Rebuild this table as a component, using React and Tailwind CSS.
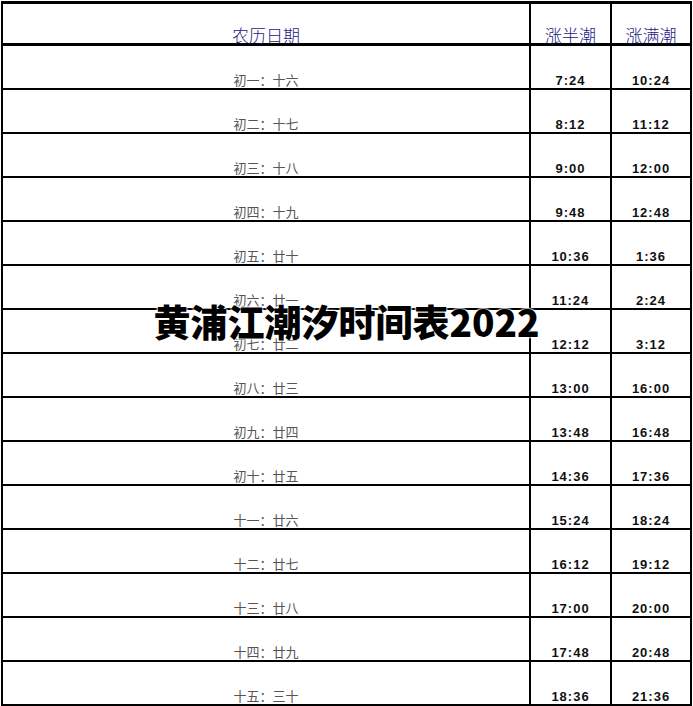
import React from "react";

const rows = [
  ["初一：十六", "7:24", "10:24"],
  ["初二：十七", "8:12", "11:12"],
  ["初三：十八", "9:00", "12:00"],
  ["初四：十九", "9:48", "12:48"],
  ["初五：廿十", "10:36", "1:36"],
  ["初六：廿一", "11:24", "2:24"],
  ["初七：廿二", "12:12", "3:12"],
  ["初八：廿三", "13:00", "16:00"],
  ["初九：廿四", "13:48", "16:48"],
  ["初十：廿五", "14:36", "17:36"],
  ["十一：廿六", "15:24", "18:24"],
  ["十二：廿七", "16:12", "19:12"],
  ["十三：廿八", "17:00", "20:00"],
  ["十四：廿九", "17:48", "20:48"],
  ["十五：三十", "18:36", "21:36"],
];

export default function App() {
  return (
    <div className="relative w-[693px] h-[706px] bg-white overflow-hidden">
      <div className="ml-[1px] mt-[1px] w-[691px] border-t-[3px] border-x-2 border-black">
        <div className="grid grid-cols-[526px_81px_1fr] h-[42px] border-b-[3px] border-black">
          <div className="flex items-end justify-center pb-0 text-[17px] leading-[16px] text-[#1c2180] [font-family:'Noto_Sans_CJK_SC',sans-serif] font-light">
            农历日期
          </div>
          <div className="flex items-end justify-center pb-0 border-l-2 border-black text-[17px] leading-[16px] text-[#1c2180] [font-family:'Noto_Sans_CJK_SC',sans-serif] font-light">
            涨半潮
          </div>
          <div className="flex items-end justify-center pb-0 border-l-2 border-black text-[17px] leading-[16px] text-[#1c2180] [font-family:'Noto_Sans_CJK_SC',sans-serif] font-light">
            涨满潮
          </div>
        </div>
        {rows.map((r, i) => (
          <div
            key={i}
            className="grid grid-cols-[526px_81px_1fr] h-[44px] border-b-2 border-black"
          >
            <div className="flex items-end justify-center pb-[1px] text-[13px] leading-[14px] text-[#555] [font-family:'Noto_Sans_CJK_SC',sans-serif] font-normal">
              {r[0]}
            </div>
            <div className="flex items-end justify-center pb-0 border-l-2 border-black text-[13px] leading-[14px] font-bold tracking-[1px] text-[#111] [font-family:'Liberation_Sans',sans-serif]">
              {r[1]}
            </div>
            <div className="flex items-end justify-center pb-0 border-l-2 border-black text-[13px] leading-[14px] font-bold tracking-[1px] text-[#111] [font-family:'Liberation_Sans',sans-serif]">
              {r[2]}
            </div>
          </div>
        ))}
      </div>
      <div className="absolute left-0 right-0 top-[296px] text-center text-[37px] leading-[50px] font-black text-black [font-family:'Noto_Sans_CJK_SC',sans-serif] [text-shadow:0_0_2px_#fff,0_0_2px_#fff,0_0_3px_#fff]">
        黄浦江潮汐时间表2022
      </div>
    </div>
  );
}
